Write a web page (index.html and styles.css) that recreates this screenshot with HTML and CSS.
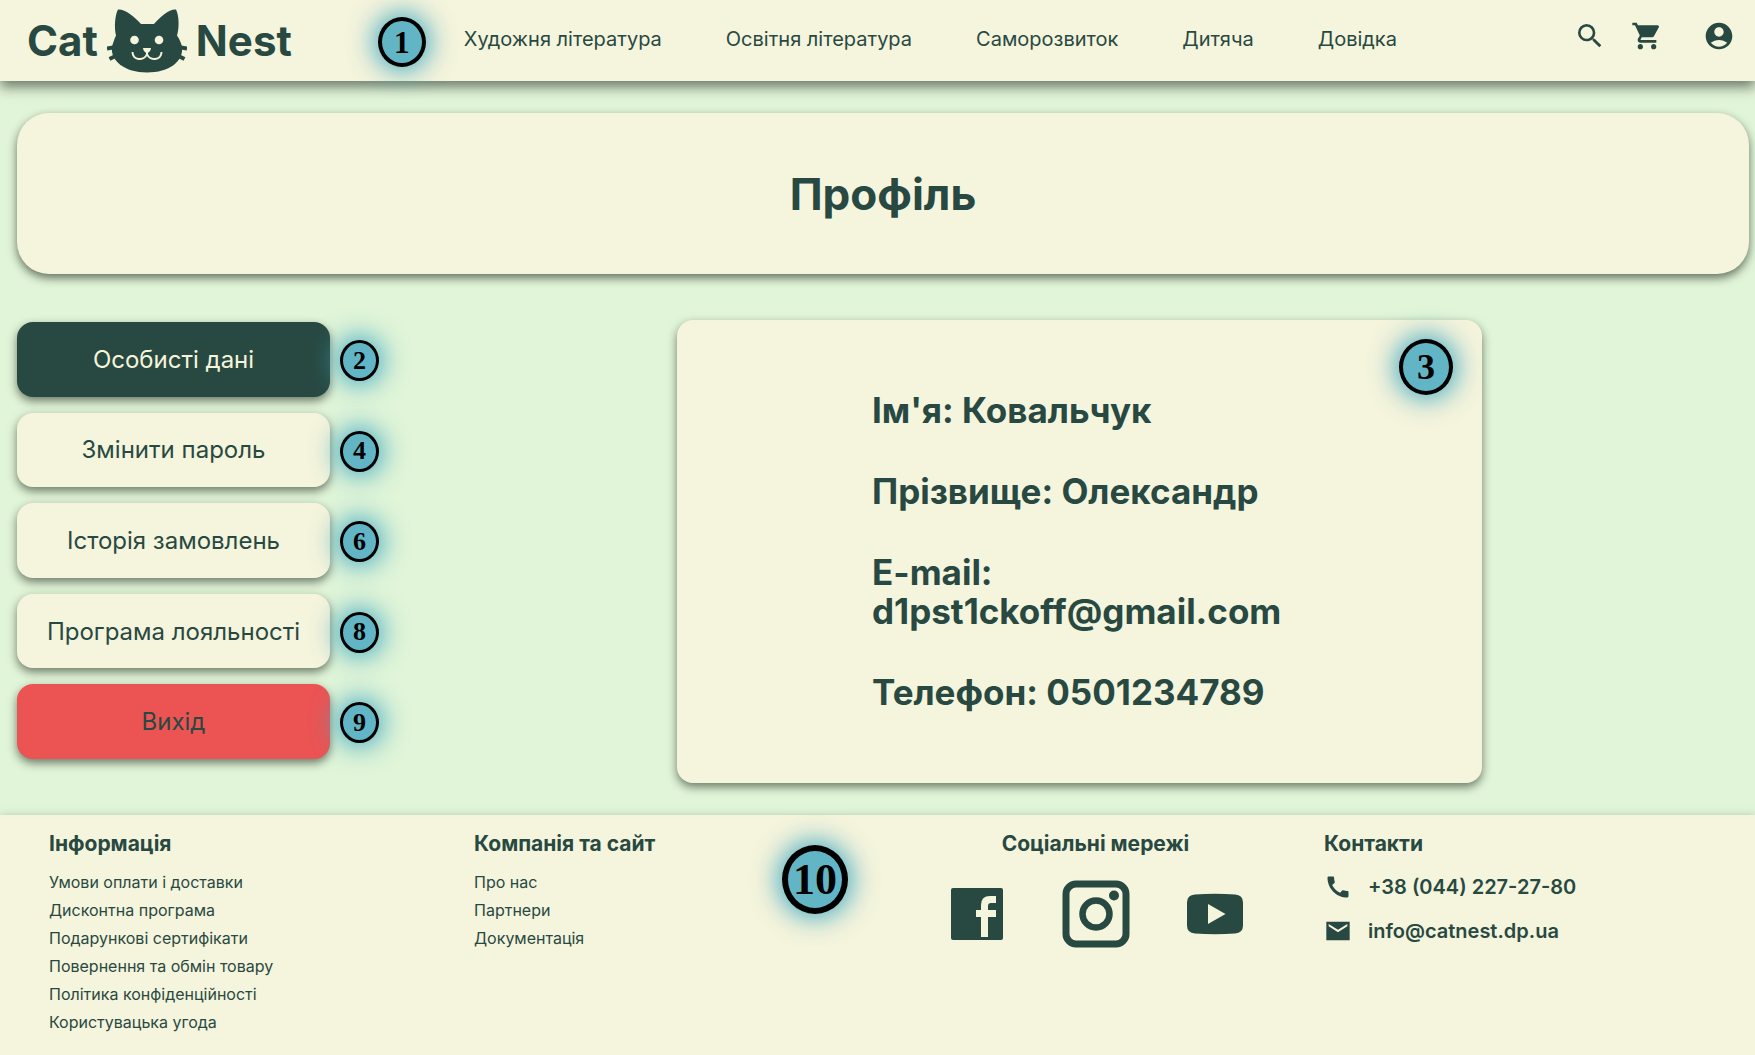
FILE: index.html
```html
<!DOCTYPE html>
<html lang="uk">
<head>
<meta charset="utf-8">
<meta name="viewport" content="width=device-width, initial-scale=1">
<title>Cat Nest — Профіль</title>
<link rel="stylesheet" href="styles.css">
</head>
<body>
<header class="header">
  <a class="logo" href="#">
    <span>Cat</span>
    <svg class="logo-cat" viewBox="0 0 80 64" aria-hidden="true">
      <path fill="currentColor" d="M11 .5C18 0 28 8 34 15h13C53 8 62 0 69 .5c3 6 3.500 18 1 26 3 4 4 8 5 11 2 15-13 26-35 26S3 52 5 37.500c1-3 2-7 4-11C7 18 8 6 11 .5z"/>
      <path stroke="currentColor" stroke-width="4" d="M0 39.500l9-1.500M2.500 50l8-4M80 39.500l-9-1.500M77.500 50l-8-4"/>
      <circle cx="27.500" cy="31" r="4.300" fill="#f5f4dc"/>
      <circle cx="52" cy="31" r="4.300" fill="#f5f4dc"/>
      <path fill="#f5f4dc" d="M36 39h8q0 3-4 5.500-4-2.500-4-5.500z"/>
      <path fill="none" stroke="#f5f4dc" stroke-width="2" d="M40 43v3M25.500 43c0 9 12 9 14.500 2 2.500 7 14.500 7 14.500-2"/>
    </svg>
    <span>Nest</span>
  </a>
  <nav class="nav" aria-label="Категорії">
    <span class="badge badge-md nav-badge">1</span>
    <a href="#">Художня література</a>
    <a href="#">Освітня література</a>
    <a href="#">Саморозвиток</a>
    <a href="#">Дитяча</a>
    <a href="#">Довідка</a>
  </nav>
  <div class="tools">
    <button type="button" aria-label="Пошук"><svg viewBox="0 0 24 24"><path d="M15.500 14h-.79l-.28-.27A6.470 6.470 0 0 0 16 9.500 6.500 6.500 0 1 0 9.500 16c1.610 0 3.090-.59 4.230-1.570l.27.28v.79l5 4.990L20.490 19l-4.990-5zm-6 0C7.010 14 5 11.990 5 9.500S7.010 5 9.500 5 14 7.010 14 9.500 11.990 14 9.500 14z"/></svg></button>
    <button type="button" aria-label="Кошик"><svg viewBox="0 0 24 24"><path d="M7 18c-1.100 0-1.990.9-1.990 2S5.900 22 7 22s2-.9 2-2-.9-2-2-2zM1 2v2h2l3.600 7.590-1.350 2.450c-.16.28-.25.61-.25.960 0 1.100.9 2 2 2h12v-2H7.420c-.14 0-.25-.11-.25-.25l.03-.12.9-1.630h7.450c.75 0 1.410-.41 1.750-1.030l3.580-6.490A1 1 0 0 0 20 4H5.210l-.94-2H1zm16 16c-1.100 0-1.990.9-1.990 2s.89 2 1.990 2 2-.9 2-2-.9-2-2-2z"/></svg></button>
    <button type="button" class="account" aria-label="Обліковий запис"><svg viewBox="0 0 24 24"><path d="M12 2C6.480 2 2 6.480 2 12s4.480 10 10 10 10-4.480 10-10S17.520 2 12 2zm0 3.500c1.930 0 3.500 1.570 3.500 3.500s-1.570 3.500-3.500 3.500S8.500 10.930 8.500 9 10.070 5.500 12 5.500zM12 20c-2.030 0-4.430-.82-6.140-2.880C7.550 15.800 9.680 15 12 15s4.450.8 6.140 2.120C16.430 19.180 14.030 20 12 20z"/></svg></button>
  </div>
</header>

<main class="page">
  <section class="banner"><h1>Профіль</h1></section>
  <div class="profile">
    <div class="menu">
      <div class="menu-item"><button type="button" class="active">Особисті дані</button><span class="badge badge-sm">2</span></div>
      <div class="menu-item"><button type="button">Змінити пароль</button><span class="badge badge-sm">4</span></div>
      <div class="menu-item"><button type="button">Історія замовлень</button><span class="badge badge-sm">6</span></div>
      <div class="menu-item"><button type="button">Програма лояльності</button><span class="badge badge-sm">8</span></div>
      <div class="menu-item"><button type="button" class="exit">Вихід</button><span class="badge badge-sm">9</span></div>
    </div>
    <section class="card">
      <span class="badge badge-lg card-badge">3</span>
      <p>Ім'я: Ковальчук</p>
      <p>Прізвище: Олександр</p>
      <p>E-mail: d1pst1ckoff@gmail.com</p>
      <p>Телефон: 0501234789</p>
    </section>
  </div>
</main>

<footer class="footer">
  <section>
    <h2>Інформація</h2>
    <ul>
      <li><a href="#">Умови оплати і доставки</a></li>
      <li><a href="#">Дисконтна програма</a></li>
      <li><a href="#">Подарункові сертифікати</a></li>
      <li><a href="#">Повернення та обмін товару</a></li>
      <li><a href="#">Політика конфіденційності</a></li>
      <li><a href="#">Користувацька угода</a></li>
    </ul>
  </section>
  <section class="company">
    <h2>Компанія та сайт</h2>
    <ul>
      <li><a href="#">Про нас</a></li>
      <li><a href="#">Партнери</a></li>
      <li><a href="#">Документація</a></li>
    </ul>
    <span class="badge badge-xl footer-badge">10</span>
  </section>
  <section class="social">
    <h2>Соціальні мережі</h2>
    <div class="social-links">
      <a href="#" aria-label="Facebook"><svg viewBox="0 0 68 68"><path d="M10 8h48q2 0 2 2v48q0 2-2 2H10q-2 0-2-2V10q0-2 2-2z"/><path fill="#f5f4dc" d="M38 57V37h-5v-7h5v-5q0-9 9-9h6v7h-5q-3 0-3 3v4h8v7h-8v20z"/></svg></a>
      <a href="#" aria-label="Instagram"><svg viewBox="0 0 68 68"><rect x="4" y="4" width="60" height="60" rx="10" fill="none" stroke="currentColor" stroke-width="7"/><circle cx="34" cy="34" r="13.500" fill="none" stroke="currentColor" stroke-width="6.500"/><circle cx="52" cy="15.500" r="5"/></svg></a>
      <a href="#" aria-label="YouTube"><svg viewBox="0 0 68 68"><path fill-rule="evenodd" d="M14 14.500q20-1.500 40 0 8 .5 8 8v23q0 7.500-8 8-20 1.500-40 0-8-.5-8-8v-23q0-7.500 8-8zM27 24v20l17.500-10z"/></svg></a>
    </div>
  </section>
  <section class="contacts">
    <h2>Контакти</h2>
    <a href="#"><svg viewBox="0 0 24 24"><path d="M20.010 15.380c-1.230 0-2.420-.2-3.530-.56a.98.98 0 0 0-1.010.24l-1.570 1.970c-2.830-1.350-5.480-3.900-6.890-6.830l1.950-1.660c.27-.28.35-.67.24-1.020-.37-1.110-.56-2.300-.56-3.530 0-.54-.45-.99-.99-.99H4.190C3.650 3 3 3.240 3 3.990 3 13.280 10.730 21 20.010 21c.71 0 .99-.63.99-1.180v-3.450c0-.54-.45-.99-.99-.99z"/></svg>+38 (044) 227-27-80</a>
    <a href="#"><svg viewBox="0 0 24 24"><path d="M22 4H2v16h20V4zm-2 4-8 5-8-5V6l8 5 8-5v2z"/></svg>info@catnest.dp.ua</a>
  </section>
</footer>
</body>
</html>
```
FILE: styles.css
```css
* { box-sizing: border-box; }

body {
  margin: 0;
  min-height: 100vh;
  display: flex;
  flex-direction: column;
  background: #e1f5d8;
  color: #284942;
  font-family: Inter, "Liberation Sans", sans-serif;
}

h1, h2, p, ul { margin: 0; padding: 0; font-weight: 700; }
ul { list-style: none; font-weight: 400; }
a { color: inherit; text-decoration: none; }
svg { display: block; fill: currentColor; }

button {
  border: 0;
  padding: 0;
  background: none;
  color: inherit;
  font: inherit;
  cursor: pointer;
}

.header {
  display: flex;
  align-items: center;
  height: 81px;
  padding: 0 20px 0 27px;
  background: #f5f4dc;
  box-shadow: 0 6px 12px rgba(30, 40, 30, 0.6);
}

.logo {
  display: flex;
  align-items: center;
  gap: 9px;
  font-size: 42px;
  font-weight: 700;
}
.logo-cat { width: 80px; height: 64px; }

.nav {
  position: relative;
  display: flex;
  flex: 1;
  gap: 64px;
  margin-left: 172px;
  padding-bottom: 4px;
  font-size: 20px;
  line-height: 24px;
}
.nav-badge { left: -86px; top: -10px; }

.tools { display: flex; gap: 25px; padding-bottom: 9px; }
.tools svg { width: 32px; height: 32px; }
.account { margin-left: 15px; }

/* Numbered markers laid over the page sections */
.badge {
  position: absolute;
  z-index: 2;
  display: flex;
  align-items: center;
  justify-content: center;
  border: 4px solid #000;
  border-radius: 50%;
  background: #62b5c5;
  box-shadow: 0 0 26px 4px rgba(60, 166, 194, 0.95);
  color: #000;
  font-family: "Liberation Serif", serif;
  font-weight: 700;
  line-height: 1;
}
.badge-sm { width: 39px; height: 41px; border-width: 3px; font-size: 26px; }
.badge-md { width: 48px; height: 50px; font-size: 32px; }
.badge-lg { width: 54px; height: 56px; font-size: 36px; }
.badge-xl { width: 66px; height: 69px; border-width: 6px; font-size: 44px; }

.page { padding: 32px 6px 32px 17px; }

.banner {
  display: flex;
  align-items: center;
  justify-content: center;
  height: 161px;
  border-radius: 32px;
  background: #f5f4dc;
  box-shadow: 0 4px 10px rgba(30, 40, 30, 0.65);
}
h1 { font-size: 44px; line-height: 52px; }

.profile {
  display: grid;
  grid-template-columns: 313px 1fr;
  column-gap: 80px;
  margin-top: 46px;
}

.menu {
  display: grid;
  grid-auto-rows: 1fr;
  gap: 16px;
  padding: 2px 0 24px;
}
.menu-item { position: relative; }
.menu-item button {
  width: 100%;
  height: 100%;
  border-radius: 16px;
  background: #f5f4dc;
  box-shadow: 0 4px 10px rgba(30, 40, 30, 0.6);
  font-size: 24px;
}
.menu-item .active { background: #284942; color: #f5f4dc; }
.menu-item .exit { background: #ec5353; }
.menu-item .badge { left: calc(100% + 10px); top: 18px; }

.card {
  position: relative;
  justify-self: center;
  display: flex;
  flex-direction: column;
  gap: 42px;
  width: min(100%, 805px);
  padding: 71px 180px 71px 195px;
  border-radius: 16px;
  background: #f5f4dc;
  box-shadow: 0 4px 10px rgba(30, 40, 30, 0.6);
  font-size: 35px;
  line-height: 39px;
}
.card-badge { right: 29px; top: 19px; }

.footer {
  display: grid;
  grid-template-columns: repeat(4, 1fr);
  flex: 1;
  padding: 16px 6px 16px 49px;
  background: #f5f4dc;
  box-shadow: 0 4px 10px rgba(30, 40, 30, 0.5);
}
h2 { font-size: 21px; line-height: 26px; }
.footer ul { margin-top: 11px; font-size: 16px; line-height: 28px; }

.company { position: relative; }
.footer-badge { left: 308px; top: 14px; }

.social {
  display: flex;
  flex-direction: column;
  align-items: center;
  gap: 23px;
  padding-right: 32px;
}
.social-links { display: flex; gap: 51px; }
.social-links svg { width: 68px; height: 68px; }

.contacts { display: flex; flex-direction: column; align-items: flex-start; gap: 16px; }
.contacts a {
  display: flex;
  align-items: center;
  gap: 16px;
  font-size: 20px;
  font-weight: 600;
}
.contacts svg { width: 28px; height: 28px; }
```
